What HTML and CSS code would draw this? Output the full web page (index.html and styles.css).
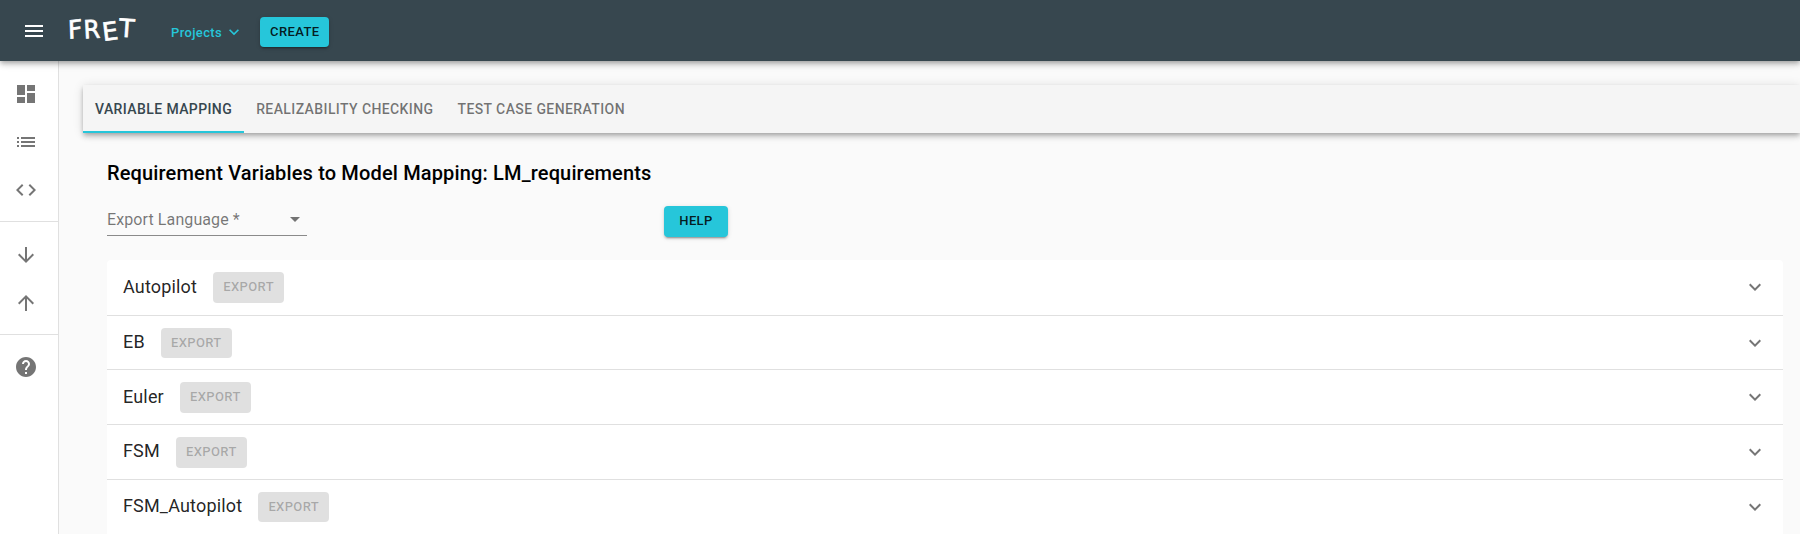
FILE: index.html
```html
<!DOCTYPE html>
<html lang="en">
<head>
    <meta charset="UTF-8">
    <title>FRET</title>
    <link rel="stylesheet" href="styles.css">
</head>
<body>
    <!-- Top bar -->
    <header class="topbar">
        <button class="menu-btn" aria-label="Menu">
            <svg class="icon icon-white" viewBox="0 0 24 24"><path d="M3 18h18v-2H3v2zm0-5h18v-2H3v2zm0-7v2h18V6H3z"/></svg>
        </button>
        <div class="logo"><span class="l1">F</span><span class="l2">R</span><span class="l3">E</span><span class="l4">T</span></div>
        <a class="projects">Projects
            <svg class="icon-sm" viewBox="0 0 24 24"><path d="M7.41 8.59L12 13.17l4.59-4.58L18 10l-6 6-6-6 1.41-1.41z"/></svg>
        </a>
        <button class="btn btn-primary btn-create">Create</button>
    </header>

    <div class="layout">
        <!-- Side navigation -->
        <aside class="sidebar">
            <div class="side-group">
                <svg class="icon" viewBox="0 0 24 24"><path d="M3 13h8V3H3v10zm0 8h8v-6H3v6zm10 0h8V11h-8v10zm0-18v6h8V3h-8z"/></svg>
                <svg class="icon" viewBox="0 0 24 24"><path d="M3 13h2v-2H3v2zm0 4h2v-2H3v2zm0-8h2V7H3v2zm4 4h14v-2H7v2zm0 4h14v-2H7v2zM7 7v2h14V7H7z"/></svg>
                <svg class="icon" viewBox="0 0 24 24"><path d="M9.4 16.6L4.8 12l4.6-4.6L8 6l-6 6 6 6 1.4-1.4zm5.2 0l4.6-4.6-4.6-4.6L16 6l6 6-6 6-1.4-1.4z"/></svg>
            </div>
            <div class="side-group">
                <svg class="icon" viewBox="0 0 24 24"><path d="M20 12l-1.41-1.41L13 16.17V4h-2v12.17l-5.58-5.59L4 12l8 8 8-8z"/></svg>
                <svg class="icon" viewBox="0 0 24 24"><path d="M4 12l1.41 1.41L11 7.83V20h2V7.83l5.58 5.59L20 12l-8-8-8 8z"/></svg>
            </div>
            <div class="side-group">
                <svg class="icon" viewBox="0 0 24 24"><path d="M12 2C6.48 2 2 6.48 2 12s4.48 10 10 10 10-4.48 10-10S17.52 2 12 2zm1 17h-2v-2h2v2zm2.07-7.75l-.9.92C13.45 12.9 13 13.5 13 15h-2v-.5c0-1.1.45-2.1 1.17-2.83l1.24-1.26c.37-.36.59-.86.59-1.41 0-1.1-.9-2-2-2s-2 .9-2 2H8c0-2.21 1.79-4 4-4s4 1.79 4 4c0 .88-.36 1.68-.93 2.25z"/></svg>
            </div>
        </aside>

        <main class="content">
            <!-- Tabs -->
            <nav class="tabs">
                <a class="tab tab-active">Variable Mapping</a>
                <a class="tab">Realizability Checking</a>
                <a class="tab">Test Case Generation</a>
            </nav>

            <section class="panel">
                <h2 class="panel-title">Requirement Variables to Model Mapping: LM_requirements</h2>

                <div class="toolbar">
                    <div class="select">
                        <span class="select-label">Export Language *</span>
                        <span class="select-arrow"></span>
                    </div>
                    <button class="btn btn-primary btn-help">Help</button>
                </div>

                <!-- One row for each component -->
                <div class="accordion">
                    <div class="row">
                        <span class="row-name">Autopilot</span>
                        <button class="btn btn-disabled">Export</button>
                        <svg class="icon row-chevron" viewBox="0 0 24 24"><path d="M16.59 8.59L12 13.17 7.41 8.59 6 10l6 6 6-6z"/></svg>
                    </div>
                    <div class="row">
                        <span class="row-name">EB</span>
                        <button class="btn btn-disabled">Export</button>
                        <svg class="icon row-chevron" viewBox="0 0 24 24"><path d="M16.59 8.59L12 13.17 7.41 8.59 6 10l6 6 6-6z"/></svg>
                    </div>
                    <div class="row">
                        <span class="row-name">Euler</span>
                        <button class="btn btn-disabled">Export</button>
                        <svg class="icon row-chevron" viewBox="0 0 24 24"><path d="M16.59 8.59L12 13.17 7.41 8.59 6 10l6 6 6-6z"/></svg>
                    </div>
                    <div class="row">
                        <span class="row-name">FSM</span>
                        <button class="btn btn-disabled">Export</button>
                        <svg class="icon row-chevron" viewBox="0 0 24 24"><path d="M16.59 8.59L12 13.17 7.41 8.59 6 10l6 6 6-6z"/></svg>
                    </div>
                    <div class="row">
                        <span class="row-name">FSM_Autopilot</span>
                        <button class="btn btn-disabled">Export</button>
                        <svg class="icon row-chevron" viewBox="0 0 24 24"><path d="M16.59 8.59L12 13.17 7.41 8.59 6 10l6 6 6-6z"/></svg>
                    </div>
                </div>
            </section>
        </main>
    </div>
</body>
</html>
```

FILE: styles.css
```css
/* Basic reset */
* {
    margin: 0;
    padding: 0;
    box-sizing: border-box;
}

html, body {
    height: 100%;
    overflow: hidden;
}

body {
    background-color: #fafafa;
    font-family: Roboto, "Liberation Sans", sans-serif;
    color: rgba(0, 0, 0, 0.87);
}

.icon {
    width: 24px;
    height: 24px;
    fill: rgba(0, 0, 0, 0.54);
    display: block;
    flex: none;
}

.icon-white {
    fill: #fff;
}

/* Top bar */
.topbar {
    position: relative;
    z-index: 2;
    height: 61px;
    background-color: #37474f;
    display: flex;
    align-items: center;
    box-shadow: 0 2px 4px -1px rgba(0,0,0,0.2), 0 4px 5px 0 rgba(0,0,0,0.14), 0 1px 10px 0 rgba(0,0,0,0.12);
}

.menu-btn {
    width: 48px;
    height: 48px;
    margin-left: 10px;
    background: none;
    border: none;
    display: flex;
    align-items: center;
    justify-content: center;
}

.logo {
    width: 72px;
    margin-left: 10px;
    margin-bottom: 2px;
    color: #fff;
    font-family: "DejaVu Sans", sans-serif;
    font-size: 25px;
    -webkit-text-stroke: 0.7px #fff;
    display: flex;
    gap: 1px;
    line-height: 1;
}

.logo span {
    display: block;
}

.l1 { transform: rotate(-7deg) skewX(-5deg); }
.l2 { transform: rotate(-3deg) scaleX(0.95); }
.l3 { transform: rotate(-7deg) translateY(2px); }
.l4 { transform: rotate(4deg) translateY(-1px); }

.projects {
    margin-left: 31px;
    margin-top: 3px;
    color: #26c6da;
    font-size: 13px;
    font-weight: 500;
    letter-spacing: 0.37px;
    display: flex;
    align-items: center;
    gap: 2px;
}

.icon-sm {
    width: 20px;
    height: 20px;
    fill: #26c6da;
}

/* Buttons */
.btn {
    border: none;
    border-radius: 4px;
    font-family: inherit;
    font-size: 13px;
    font-weight: 500;
    line-height: 22.75px;
    letter-spacing: 0.37px;
    text-transform: uppercase;
    padding: 4px 10px;
}

.btn-primary {
    background-color: #26c6da;
    color: rgba(0, 0, 0, 0.87);
    box-shadow: 0 3px 1px -2px rgba(0,0,0,0.2), 0 2px 2px 0 rgba(0,0,0,0.14), 0 1px 5px 0 rgba(0,0,0,0.12);
}

.btn-create {
    margin-left: 16px;
    margin-top: 3px;
}

.btn-disabled {
    background-color: rgba(0, 0, 0, 0.12);
    color: rgba(0, 0, 0, 0.26);
    width: 71px;
    margin-left: 16px;
    margin-top: 1px;
}

/* Page body */
.layout {
    display: flex;
    height: 473px;
}

.sidebar {
    width: 59px;
    flex: none;
    background-color: #fff;
    border-right: 1px solid #e0e0e0;
}

.side-group {
    display: flex;
    flex-direction: column;
    align-items: center;
    gap: 24px;
    padding: 21px 6px 19px 0;
    border-bottom: 1px solid #e0e0e0;
}

.side-group:last-child {
    padding-top: 20px;
    border-bottom: none;
}

.content {
    flex: 1;
    min-width: 0;
    padding-top: 24px;
    padding-left: 24px;
}

/* Tabs */
.tabs {
    height: 48px;
    background-color: #f5f5f5;
    display: flex;
    box-shadow: 0 2px 4px -1px rgba(0,0,0,0.2), 0 4px 5px 0 rgba(0,0,0,0.14), 0 1px 10px 0 rgba(0,0,0,0.12);
}

.tab {
    padding: 0 12px;
    font-size: 14px;
    font-weight: 500;
    letter-spacing: 0.4px;
    line-height: 48px;
    text-transform: uppercase;
    color: rgba(0, 0, 0, 0.54);
}

.tab-active {
    color: #37474f;
    border-bottom: 2px solid #26c6da;
}

/* Panel */
.panel {
    padding: 24px 17px 0 24px;
}

.panel-title {
    font-size: 20px;
    font-weight: 500;
    line-height: 32px;
    letter-spacing: 0.15px;
    color: #000;
}

.toolbar {
    display: flex;
    align-items: center;
    margin-top: 15px;
    height: 32px;
}

.select {
    width: 200px;
    height: 32px;
    border-bottom: 1px solid #8a8a8a;
    display: flex;
    align-items: center;
    justify-content: space-between;
    padding-right: 7px;
}

.select-label {
    font-size: 16px;
    letter-spacing: 0.1px;
    color: rgba(0, 0, 0, 0.54);
}

.select-arrow {
    width: 0;
    height: 0;
    border-left: 5px solid transparent;
    border-right: 5px solid transparent;
    border-top: 5px solid rgba(0, 0, 0, 0.54);
}

.btn-help {
    margin-left: 357px;
    margin-top: 3px;
    width: 64px;
}

/* Accordion */
.accordion {
    margin-top: 24px;
    padding-bottom: 6px;
    background-color: #fff;
    border-radius: 4px 4px 0 0;
}

.row {
    height: 54.7px;
    display: flex;
    align-items: center;
    padding: 0 16px;
    border-top: 1px solid #e0e0e0;
}

.row:first-child {
    border-top: none;
}

.row-name {
    font-size: 18px;
    line-height: 1.5;
    letter-spacing: 0.17px;
    margin-bottom: 2px;
}

.row-chevron {
    margin-left: auto;
}
```
